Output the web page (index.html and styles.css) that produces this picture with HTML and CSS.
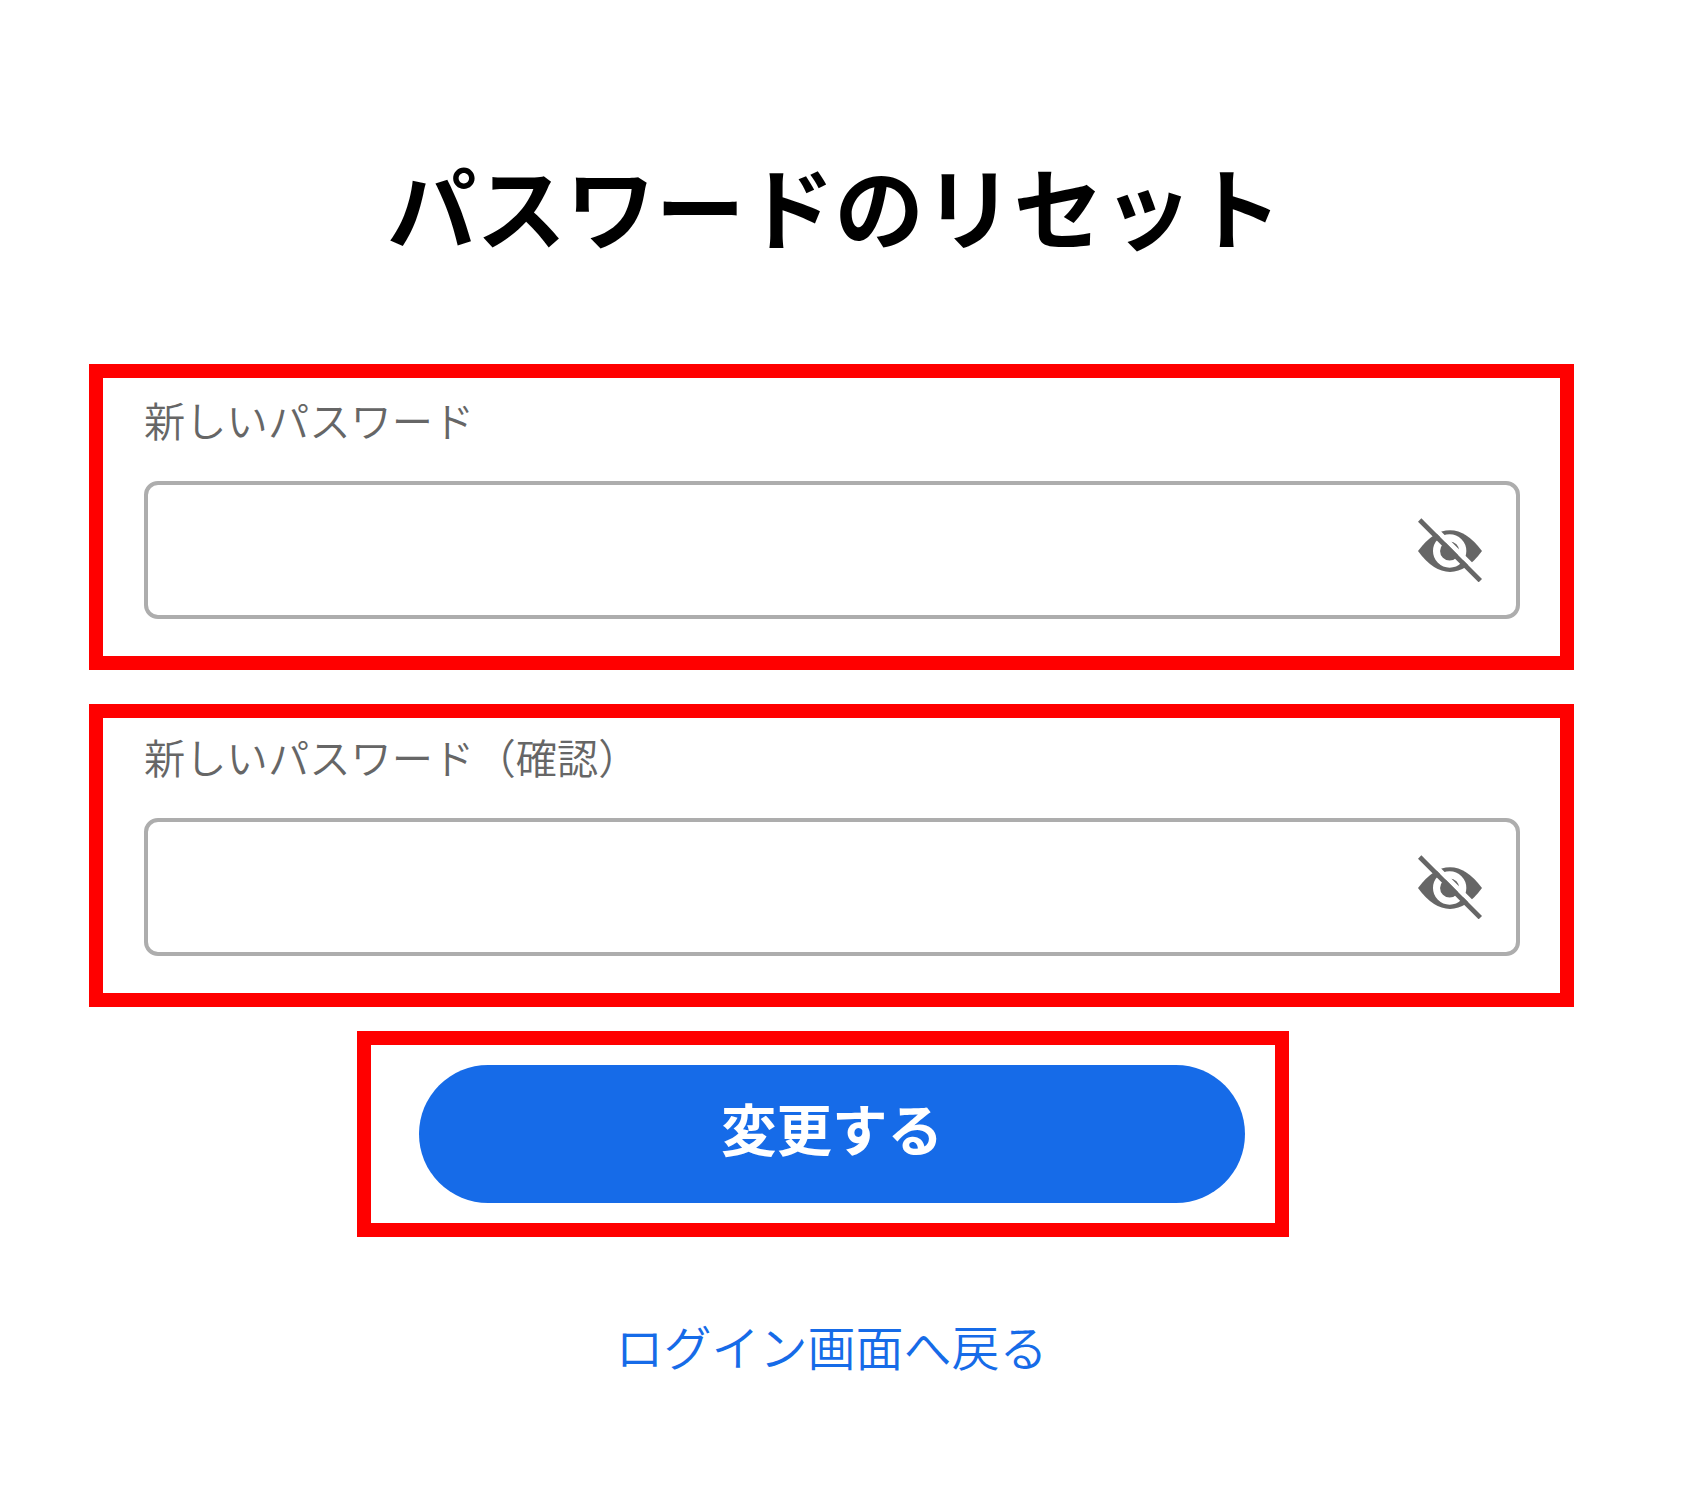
FILE: index.html
```html
<!DOCTYPE html>
<html lang="ja">
  <head>
    <meta charset="utf-8">
    <title>パスワードのリセット</title>
    <link rel="stylesheet" href="styles.css">
  </head>
  <body>
    <form class="reset">
      <h1 class="title">パスワードのリセット</h1>

      <div class="frame field">
        <label class="label" for="password">新しいパスワード</label>
        <div class="input_box">
          <input class="input" id="password" type="password">
          <svg class="eye" viewBox="117 143 190 190">
            <path fill="#666" d="M117 241Q162 179 212 179Q262 179 307 241Q262 303 212 303Q162 303 117 241Z"/>
            <circle cx="211" cy="241" r="39" fill="none" stroke="#fff" stroke-width="21"/>
            <path stroke="#fff" stroke-width="14" d="M151 158L306 313"/>
            <path stroke="#666" stroke-width="14" d="M122 149L302 329"/>
          </svg>
        </div>
      </div>

      <div class="frame field confirm">
        <label class="label" for="password_confirm">新しいパスワード（確認）</label>
        <div class="input_box">
          <input class="input" id="password_confirm" type="password">
          <svg class="eye" viewBox="117 143 190 190">
            <path fill="#666" d="M117 241Q162 179 212 179Q262 179 307 241Q262 303 212 303Q162 303 117 241Z"/>
            <circle cx="211" cy="241" r="39" fill="none" stroke="#fff" stroke-width="21"/>
            <path stroke="#fff" stroke-width="14" d="M151 158L306 313"/>
            <path stroke="#666" stroke-width="14" d="M122 149L302 329"/>
          </svg>
        </div>
      </div>

      <div class="frame submit">
        <button class="button" type="button">変更する</button>
      </div>

      <a class="back" href="#">ログイン画面へ戻る</a>
    </form>
  </body>
</html>
```
FILE: styles.css
```css
* {
  box-sizing: border-box;
}
body {
  margin: 0;
  background-color: #fff;
  font-family: "Noto Sans CJK JP", sans-serif;
}

.reset {
  width: 1485px;
  margin-left: 89px;
  padding-top: 144px;
}

.title {
  margin: 0 0 100px;
  padding-left: 6px;
  font-size: 89.5px;
  line-height: 120px;
  font-weight: bold;
  text-align: center;
  color: #000;
}

.frame {
  border: 14px solid #f00;
}

.field {
  height: 306px;
  padding: 15px 40px 0 41px;
}

.confirm {
  height: 303px;
  margin-top: 34px;
  padding-top: 12px;
}

.label {
  display: block;
  height: 88px;
  font-size: 41.3px;
  line-height: 52px;
  font-weight: 350;
  color: #666;
}

.input_box {
  display: flex;
  align-items: center;
  height: 138px;
  padding-right: 34px;
  border: 4px solid #adadad;
  border-radius: 14px;
}

.input {
  flex: 1;
  height: 100%;
  padding: 0 30px;
  border: none;
  outline: none;
  background: none;
  font-size: 48px;
}

.eye {
  width: 64px;
  height: 64px;
}

.submit {
  width: 932px;
  height: 206px;
  margin: 24px 0 0 268px;
  padding: 20px 30px 20px 48px;
}

.button {
  display: block;
  width: 100%;
  height: 138px;
  padding: 0 0 14px;
  border: none;
  border-radius: 69px;
  background-color: #166be8;
  color: #fff;
  font-family: inherit;
  font-size: 55.5px;
  font-weight: bold;
}

.back {
  display: block;
  margin-top: 73px;
  font-size: 48px;
  line-height: 70px;
  font-weight: 350;
  text-align: center;
  text-decoration: none;
  color: #166be8;
}
```
